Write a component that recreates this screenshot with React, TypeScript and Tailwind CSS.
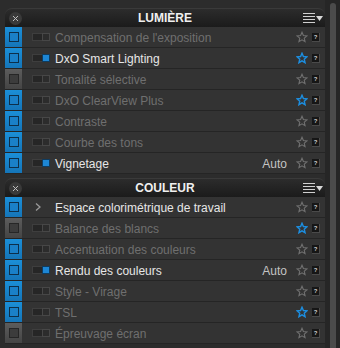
import React from 'react';

type RowState = 'on' | 'off' | 'expand';

interface Row {
  label: string;
  state: RowState;
  strip: 'blue' | 'grey';
  fav?: boolean;
  auto?: boolean;
}

const lumiere: Row[] = [
  { label: "Compensation de l'exposition", state: 'off', strip: 'blue' },
  { label: 'DxO Smart Lighting', state: 'on', strip: 'blue', fav: true },
  { label: 'Tonalité sélective', state: 'off', strip: 'grey' },
  { label: 'DxO ClearView Plus', state: 'off', strip: 'blue', fav: true },
  { label: 'Contraste', state: 'off', strip: 'blue' },
  { label: 'Courbe des tons', state: 'off', strip: 'blue' },
  { label: 'Vignetage', state: 'on', strip: 'blue', auto: true },
];

const couleur: Row[] = [
  { label: 'Espace colorimétrique de travail', state: 'expand', strip: 'blue' },
  { label: 'Balance des blancs', state: 'off', strip: 'grey', fav: true },
  { label: 'Accentuation des couleurs', state: 'off', strip: 'blue' },
  { label: 'Rendu des couleurs', state: 'on', strip: 'blue', auto: true },
  { label: 'Style - Virage', state: 'off', strip: 'blue' },
  { label: 'TSL', state: 'off', strip: 'blue', fav: true },
  { label: 'Épreuvage écran', state: 'off', strip: 'grey' },
];

function Star({ active }: { active?: boolean }) {
  return (
    <svg width="12" height="12" viewBox="0 0 24 24" className="shrink-0">
      <path
        d="M12 2.5l2.8 6.6 7.1.6-5.4 4.7 1.6 7-6.1-3.7-6.1 3.7 1.6-7-5.4-4.7 7.1-.6z"
        fill="none"
        stroke={active ? '#1c8ee0' : '#707070'}
        strokeWidth={active ? 2.8 : 2.2}
        strokeLinejoin="miter"
      />
    </svg>
  );
}

function HelpBox() {
  return (
    <div className="w-[8px] h-[9px] bg-[#161616] border-r border-b border-[#4a4a4a] flex items-center justify-center text-[6px] font-bold leading-none text-[#cfcfcf]">
      ?
    </div>
  );
}

function Toggle({ on }: { on: boolean }) {
  return (
    <div className="w-[18px] h-[8px] flex shrink-0">
      <div className="w-[10px] h-full bg-[#262626] border border-[#3e3e3e] border-r-0" />
      {on ? (
        <div className="w-[8px] h-full bg-[#1d86d4] border border-[#0f3c60]" />
      ) : (
        <div className="w-[8px] h-full bg-[#2c2c2c] border border-[#474747]" />
      )}
    </div>
  );
}

function ItemRow({ row }: { row: Row }) {
  const lit = row.state !== 'off';
  return (
    <div className="h-[21px] flex border-b border-[#252525]">
      <div
        className={`w-[17px] h-full flex items-center justify-center ${
          row.strip === 'blue'
            ? 'bg-gradient-to-b from-[#1b8fd8] to-[#1575b8]'
            : 'bg-gradient-to-b from-[#5c5c5c] to-[#454545]'
        }`}
      >
        <div
          className={`w-[10px] h-[10px] border ${
            row.strip === 'blue' ? 'border-[#0d2f4a] bg-[#1a80c8]' : 'border-[#262626] bg-[#3c3c3c]'
          }`}
        />
      </div>
      <div className="flex-1 flex items-center bg-[#333333] pr-[5px]">
        <div className="w-[33px] pl-[10px] flex items-center">
          {row.state === 'expand' ? (
            <svg width="8" height="10" viewBox="0 0 8 10" className="ml-[2px]">
              <path d="M2 1.5l4 3.5-4 3.5" fill="none" stroke="#9a9a9a" strokeWidth="1.3" />
            </svg>
          ) : (
            <Toggle on={row.state === 'on'} />
          )}
        </div>
        <span className={`flex-1 text-[12px] leading-none pt-[1px] ${lit ? 'text-[#e6e6e6]' : 'text-[#6f6f6f]'}`}>
          {row.label}
        </span>
        {row.auto && <span className="text-[12px] leading-none pt-[1px] text-[#c4c4c4] mr-[9px]">Auto</span>}
        <Star active={row.fav} />
        <div className="ml-[4px]">
          <HelpBox />
        </div>
      </div>
    </div>
  );
}

function Header({ title }: { title: string }) {
  return (
    <div className="h-[19px] rounded-t-[7px] bg-gradient-to-b from-[#2c2c2c] to-[#1b1b1b] border-t border-[#3a3a3a] grid grid-cols-[30px_1fr_30px] items-center">
      <div className="pl-[4px] flex items-center">
        <div className="w-[13px] h-[13px] rounded-full bg-[#3a3a3a] flex items-center justify-center">
          <svg width="7" height="7" viewBox="0 0 7 7">
            <path d="M1 1l5 5M6 1l-5 5" stroke="#bdbdbd" strokeWidth="1" />
          </svg>
        </div>
      </div>
      <div className="text-center text-[12px] font-bold text-[#f0f0f0] leading-none">{title}</div>
      <div className="flex items-center justify-end pr-[2px] gap-[1px]">
        <div className="flex flex-col gap-[2px]">
          <div className="w-[12px] h-[1px] bg-[#d0d0d0]" />
          <div className="w-[12px] h-[1px] bg-[#d0d0d0]" />
          <div className="w-[12px] h-[1px] bg-[#d0d0d0]" />
          <div className="w-[12px] h-[1px] bg-[#d0d0d0]" />
        </div>
        <svg width="7" height="5" viewBox="0 0 7 5">
          <path d="M0 0h7L3.5 5z" fill="#d8d8d8" />
        </svg>
      </div>
    </div>
  );
}

function Section({ title, rows }: { title: string; rows: Row[] }) {
  return (
    <div className="flex flex-col">
      <Header title={title} />
      {rows.map((r) => (
        <ItemRow key={r.label} row={r} />
      ))}
    </div>
  );
}

export default function App() {
  return (
    <div className="w-[340px] h-[348px] bg-[#2c2c2c] flex overflow-hidden font-['Liberation_Sans',Arial,sans-serif]">
      <div className="w-[325px] pl-[5px] pt-[8px] flex flex-col gap-[4px]">
        <Section title="LUMIÈRE" rows={lumiere} />
        <Section title="COULEUR" rows={couleur} />
      </div>
      <div className="flex-1 flex justify-center pt-[3px] bg-[#262626]">
        <div className="w-[6px] h-full rounded-t-full bg-[#4b4b4b]" />
      </div>
    </div>
  );
}
